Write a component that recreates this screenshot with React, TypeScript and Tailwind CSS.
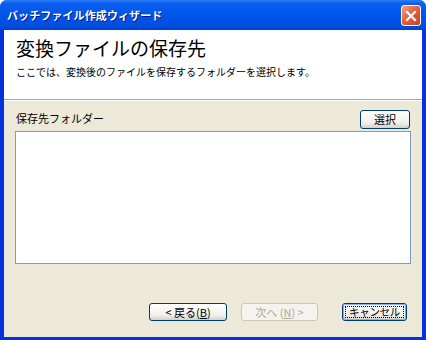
const jp = "font-['MS_UI_Gothic','Noto_Sans_CJK_JP',sans-serif]";

const XpButton = ({
  label,
  disabled,
  focused,
  className,
}: {
  label: React.ReactNode;
  disabled?: boolean;
  focused?: boolean;
  className?: string;
}) => {
  if (disabled) {
    return (
      <div
        className={`flex h-[18px] items-center justify-center rounded-[3px] border border-[#c9c7ba] bg-[#f4f3ee] text-[11px] leading-none text-[#aca899] ${className}`}
      >
        {label}
      </div>
    );
  }
  return (
    <div
      className={`flex h-[18px] items-center justify-center rounded-[3px] border border-[#003c74] bg-[linear-gradient(#ffffff,#f0f0ea_70%,#d6d0c5)] text-[11px] leading-none text-black ${className}`}
    >
      {focused ? (
        <div className="flex h-full w-full items-center justify-center rounded-[2px] border border-[#89adf4] p-[1px]">
          <span className="flex h-full w-full items-center justify-center border border-dotted border-black text-[10.5px] tracking-[-0.3px]">
            {label}
          </span>
        </div>
      ) : (
        label
      )}
    </div>
  );
};

export default function App() {
  return (
    <div
      className={`flex h-[340px] w-[426px] flex-col overflow-hidden rounded-t-[7px] bg-[#0831d9] ${jp}`}
    >
      {/* title bar */}
      <div className="relative flex h-[30px] shrink-0 items-center bg-[linear-gradient(#2d7df7,#0a5ff0_12%,#0055ea_50%,#004fe0_85%,#0042cf)] pl-[7px]">
        <span className="text-[11px] font-bold tracking-[0.1px] text-white [text-shadow:1px_1px_0_#0a1883]">
          バッチファイル作成ウィザード
        </span>
        <div className="absolute left-[401px] top-[5px] flex h-[21px] w-[20px] items-center justify-center rounded-[3px] border border-white bg-[linear-gradient(135deg,#f1a184,#e2633f_45%,#c7431f)]">
          <svg width="12" height="12" viewBox="0 0 12 12">
            <path
              d="M2 2 L10 10 M10 2 L2 10"
              stroke="white"
              strokeWidth="2.2"
              strokeLinecap="square"
            />
          </svg>
        </div>
      </div>

      <div className="mx-[4px] mb-[3px] flex flex-1 flex-col bg-[#ece9d8]">
        {/* header */}
        <div className="flex h-[69px] flex-col bg-white pl-[12px] pt-[5px]">
          <div className="text-[19px] leading-[26px] text-black">
            変換ファイルの保存先
          </div>
          <div className="mt-[5px] text-[10px] leading-[12px] text-black">
            ここでは、変換後のファイルを保存するフォルダーを選択します。
          </div>
        </div>
        <div className="h-[1px] bg-[#aca899]" />
        <div className="h-[1px] bg-white" />

        {/* body */}
        <div className="flex flex-1 flex-col px-[11px] pt-[9px]">
          <div className="flex items-end justify-between pr-[1px]">
            <span className="mb-[5px] pl-[1px] text-[11px] leading-none text-black">
              保存先フォルダー
            </span>
            <XpButton label="選択" className="h-[19px] w-[50px]" />
          </div>
          <div className="mt-[2px] h-[133px] border border-[#7f9db9] bg-white" />

          <div className="mt-auto mb-[16px] flex justify-end gap-[14px] pr-[4px]">
            <XpButton
              label={
                <span>
                  &lt; 戻る(<span className="underline">B</span>)
                </span>
              }
              className="w-[78px]"
            />
            <XpButton
              label={
                <span>
                  次へ (<span className="underline">N</span>) &gt;
                </span>
              }
              disabled
              className="w-[77px] mr-[10px]"
            />
            <XpButton label="キャンセル" focused className="w-[65px]" />
          </div>
        </div>
      </div>
    </div>
  );
}
